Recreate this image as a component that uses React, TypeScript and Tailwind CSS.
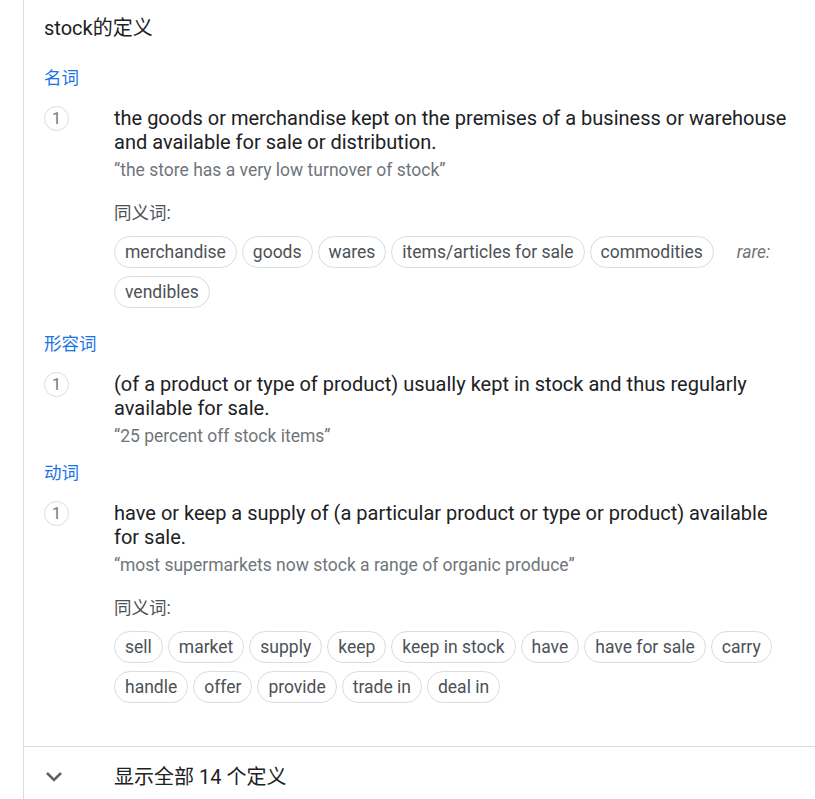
import React from 'react';

type Sense = {
  text: string;
  example: string;
  synonyms?: string[];
  rare?: string[];
};

type Entry = {
  pos: string;
  senses: Sense[];
};

const entries: Entry[] = [
  {
    pos: '名词',
    senses: [
      {
        text: 'the goods or merchandise kept on the premises of a business or warehouse and available for sale or distribution.',
        example: '“the store has a very low turnover of stock”',
        synonyms: ['merchandise', 'goods', 'wares', 'items/articles for sale', 'commodities'],
        rare: ['vendibles'],
      },
    ],
  },
  {
    pos: '形容词',
    senses: [
      {
        text: '(of a product or type of product) usually kept in stock and thus regularly available for sale.',
        example: '“25 percent off stock items”',
      },
    ],
  },
  {
    pos: '动词',
    senses: [
      {
        text: 'have or keep a supply of (a particular product or type or product) available for sale.',
        example: '“most supermarkets now stock a range of organic produce”',
        synonyms: ['sell', 'market', 'supply', 'keep', 'keep in stock', 'have', 'have for sale', 'carry', 'handle', 'offer', 'provide', 'trade in', 'deal in'],
      },
    ],
  },
];

const Chip = ({ label }: { label: string }) => (
  <span className="h-[32px] px-[10px] flex items-center rounded-full border border-[#dadce0] text-[17.5px] text-[#4d5156] whitespace-nowrap">
    {label}
  </span>
);

const SenseRow = ({ sense, index }: { sense: Sense; index: number }) => (
  <div className="flex mt-4">
    <div className="w-[70px] shrink-0">
      <div className="w-[25px] h-[25px] rounded-full border border-[#dadce0] flex items-center justify-center text-[16px] text-[#70757a]">
        {index}
      </div>
    </div>
    <div className="flex-1 min-w-0">
      <div className="text-[20px] leading-[24px] text-[#202124]">{sense.text}</div>
      <div className="mt-1 text-[17.5px] leading-[24px] text-[#70757a]">{sense.example}</div>
      {sense.synonyms && (
        <div className="mt-[19px]">
          <div className="text-[17.5px] leading-[24px] text-[#4d5156]">同义词:</div>
          <div className="mt-[11px] flex flex-wrap items-center gap-x-[5px] gap-y-2">
            {sense.synonyms.map((s) => (
              <Chip key={s} label={s} />
            ))}
            {sense.rare && (
              <>
                <span className="ml-[18px] mr-[18px] italic text-[17.5px] text-[#70757a]">rare:</span>
                {sense.rare.map((s) => (
                  <Chip key={s} label={s} />
                ))}
              </>
            )}
          </div>
        </div>
      )}
    </div>
  </div>
);

export default function App() {
  return (
    <div className="min-h-screen bg-white font-['Roboto','Noto_Sans_CJK_SC',sans-serif]">
      <div className="ml-[23px] border-l border-[#dadce0] min-h-[799px]">
        <div className="pl-5 pr-[25px] pt-[14px] pb-[43px]">
          <h2 className="text-[20px] leading-[28px] text-[#202124]">stock的定义</h2>
          {entries.map((entry, i) => (
            <div key={entry.pos} className={i === 2 ? 'mt-[13px]' : 'mt-6'}>
              <div className="text-[17.5px] leading-[24px] text-[#1a73e8]">{entry.pos}</div>
              {entry.senses.map((s, j) => (
                <SenseRow key={j} sense={s} index={j + 1} />
              ))}
            </div>
          ))}
        </div>
        <div className="border-t border-[#dadce0] h-[60px] flex items-center pl-5">
          <div className="w-[70px] shrink-0 flex items-center">
            <svg width="20" height="12" viewBox="0 0 20 12">
              <polyline points="3,2 10,9 17,2" fill="none" stroke="#5f6368" strokeWidth="2.6" />
            </svg>
          </div>
          <span className="text-[20px] text-[#202124]">显示全部 14 个定义</span>
        </div>
      </div>
    </div>
  );
}
